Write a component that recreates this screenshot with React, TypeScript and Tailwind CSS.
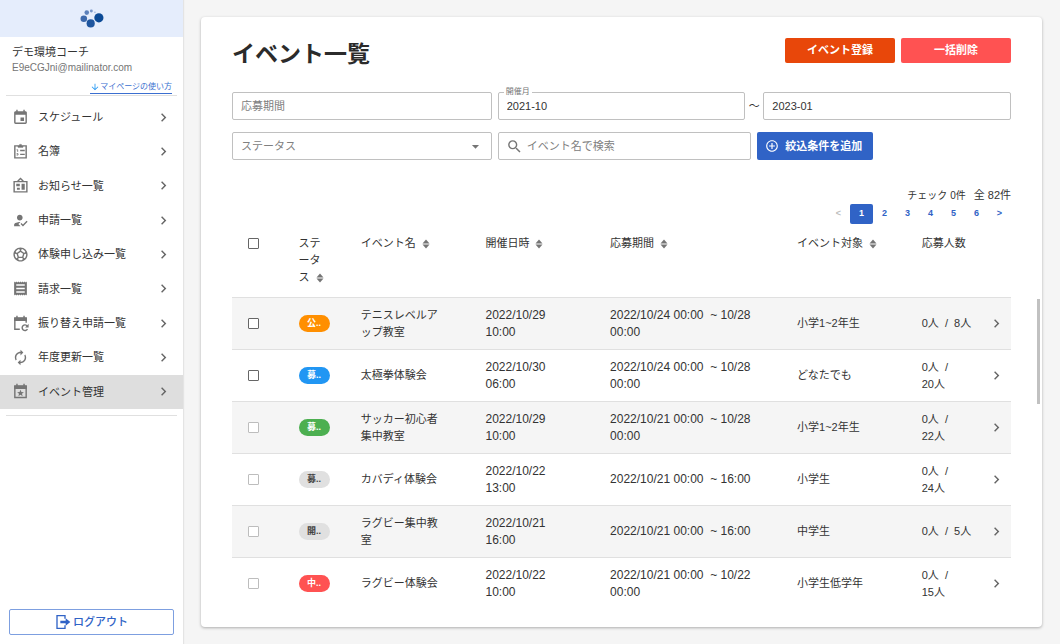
import type { ReactNode } from 'react'
import {
  MdAddCircleOutline,
  MdArrowDownward,
  MdArrowDropDown,
  MdAutorenew,
  MdChevronRight,
  MdEvent,
  MdHowToReg,
  MdSearch,
  MdSportsSoccer
} from 'react-icons/md'

interface MenuItem {
  label: string
  icon: ReactNode
  active?: boolean
}

interface EventRow {
  status: string
  chip: string
  name: string
  date: string
  period: string
  target: string
  count: string
  disabled?: boolean
}

const ClipboardListIcon = () => (
  <svg viewBox="0 0 24 24" fill="none" stroke="currentColor" strokeWidth="2">
    <path d="M9 4H4v17h16V4h-5" />
    <path d="M8.500 6V4H10a2 2 0 0 1 4 0h1.500v2z" fill="currentColor" strokeWidth="1" />
    <path d="M11.500 10.500H18M11.500 16H18" />
    <path d="M6.500 9.500h1.500v3M6.500 15h2v2h-2" strokeWidth="1.200" />
  </svg>
)

const BulletinBoardIcon = () => (
  <svg viewBox="0 0 24 24" fill="none" stroke="currentColor" strokeWidth="2">
    <path d="M3 6.500h18V21H3zM8 6l4-4 4 4" />
    <path d="M6 9.500h5v3.500H6zM13.500 9.500H18V18h-4.500zM7 15h4v3H7z" fill="currentColor" stroke="none" />
  </svg>
)

const ReceiptIcon = () => (
  <svg viewBox="0 0 24 24" fill="currentColor">
    <path d="M3 2l1.500 1.500L6 2l1.500 1.500L9 2l1.500 1.500L12 2l1.500 1.500L15 2l1.500 1.500L18 2l1.500 1.500L21 2v20l-1.500-1.500L18 22l-1.500-1.500L15 22l-1.500-1.500L12 22l-1.500-1.500L9 22l-1.500-1.500L6 22l-1.500-1.500L3 22zM6 6v2.200h12V6zm0 4.900v2.200h12v-2.200zm0 4.900V18h12v-2.200z" fillRule="evenodd" />
  </svg>
)

const CalendarRefreshIcon = () => (
  <svg viewBox="0 0 24 24" fill="none" stroke="currentColor" strokeWidth="2">
    <path d="M11 20H4V4h16v7" />
    <path d="M3 4h18v4.500H3zM6 1h2v3H6zM16 1h2v3h-2z" fill="currentColor" stroke="none" />
    <path d="M21.500 15.500a4 4 0 1 0 .3 4.500" />
    <path d="M23.500 12.500v5h-5z" fill="currentColor" stroke="none" />
  </svg>
)

const CalendarStarIcon = () => (
  <svg viewBox="0 0 24 24" fill="none" stroke="currentColor" strokeWidth="2">
    <path d="M4 4h16v16.500H4z" />
    <path d="M3 4h18v4.500H3zM6 1h2v3H6zM16 1h2v3h-2z" fill="currentColor" stroke="none" />
    <path d="m12 9.500 1.300 3.200 3.500.3-2.700 2.200.9 3.400-3-1.900-3 1.900.9-3.400L7.200 13l3.500-.3z" fill="currentColor" stroke="none" />
  </svg>
)

const LogoutIcon = () => (
  <svg viewBox="0 0 24 24" className="size-4" fill="none" stroke="currentColor" strokeWidth="2">
    <path d="M15 7V2.500H3v19h12V17" />
    <path d="M8 10.200h8V6.500l7 5.500-7 5.500v-3.700H8z" fill="currentColor" stroke="none" />
  </svg>
)

const SortIcon = () => (
  <svg viewBox="0 0 8 10" className="ml-1.5 inline-block h-[10px] w-2 align-[-2px] text-[#757575]" fill="currentColor">
    <path d="M4 .5l3.500 4h-7zM4 9.500L.5 5.500h7z" />
  </svg>
)

const Logo = () => (
  <svg viewBox="0 0 72 58" className="h-[19px] w-6">
    <circle cx="57" cy="27" r="14" fill="#0b4a96" />
    <circle cx="32" cy="44" r="12.500" fill="#1f569f" />
    <circle cx="11" cy="30" r="10" fill="#3d69ac" />
    <circle cx="20" cy="11" r="7" fill="#5b80ba" />
    <circle cx="34" cy="6" r="4.500" fill="#7795c8" />
    <circle cx="45" cy="10" r="2" fill="#8fa8d4" />
  </svg>
)

const menu: MenuItem[] = [
  { label: 'スケジュール', icon: <MdEvent /> },
  { label: '名簿', icon: <ClipboardListIcon /> },
  { label: 'お知らせ一覧', icon: <BulletinBoardIcon /> },
  { label: '申請一覧', icon: <MdHowToReg /> },
  { label: '体験申し込み一覧', icon: <MdSportsSoccer /> },
  { label: '請求一覧', icon: <ReceiptIcon /> },
  { label: '振り替え申請一覧', icon: <CalendarRefreshIcon /> },
  { label: '年度更新一覧', icon: <MdAutorenew /> },
  { label: 'イベント管理', icon: <CalendarStarIcon />, active: true }
]

const columns = [
  { label: 'ステータス', width: 'w-[8%]', sortable: true },
  { label: 'イベント名', width: 'w-[16%]', sortable: true },
  { label: '開催日時', width: 'w-[16%]', sortable: true },
  { label: '応募期間', width: 'w-[24%]', sortable: true },
  { label: 'イベント対象', width: 'w-[16%]', sortable: true },
  { label: '応募人数', width: 'w-[9%]', sortable: false }
]

const rows: EventRow[] = [
  { status: '公..', chip: 'bg-[#ff8f00] text-white', name: 'テニスレベルアップ教室', date: '2022/10/29\n10:00', period: '2022/10/24 00:00  ~ 10/28\n00:00', target: '小学1~2年生', count: '0人  /  8人' },
  { status: '募..', chip: 'bg-[#2196f3] text-white', name: '太極拳体験会', date: '2022/10/30\n06:00', period: '2022/10/24 00:00  ~ 10/28\n00:00', target: 'どなたでも', count: '0人  /\n20人' },
  { status: '募..', chip: 'bg-[#4caf50] text-white', name: 'サッカー初心者集中教室', date: '2022/10/29\n10:00', period: '2022/10/21 00:00  ~ 10/28\n00:00', target: '小学1~2年生', count: '0人  /\n22人', disabled: true },
  { status: '募..', chip: 'bg-[#e0e0e0] text-[#424242]', name: 'カバディ体験会', date: '2022/10/22\n13:00', period: '2022/10/21 00:00  ~ 16:00', target: '小学生', count: '0人  /\n24人', disabled: true },
  { status: '開..', chip: 'bg-[#e0e0e0] text-[#424242]', name: 'ラグビー集中教室', date: '2022/10/21\n16:00', period: '2022/10/21 00:00  ~ 16:00', target: '中学生', count: '0人  /  5人', disabled: true },
  { status: '中..', chip: 'bg-[#ff5252] text-white', name: 'ラグビー体験会', date: '2022/10/22\n10:00', period: '2022/10/21 00:00  ~ 10/22\n00:00', target: '小学生低学年', count: '0人  /\n15人', disabled: true }
]

const fieldClass =
  'h-7 w-full rounded-xs border border-[#c0c0c0] bg-white px-2 text-[11px] outline-none placeholder:text-[#808080]'

const checkboxClass =
  'block size-[11px] appearance-none rounded-[1px] border border-[#666] bg-white checked:bg-[#3063c6] disabled:border-[#bdbdbd]'

function Sidebar() {
  return (
    <aside className="flex w-[183px] shrink-0 flex-col bg-white shadow-[1px_0_1px_#e4e4e4]">
      <div className="flex h-[37px] items-center justify-center bg-[#e5edfc]">
        <Logo />
      </div>
      <div className="px-3 pt-[7px]">
        <p className="text-[11px] leading-[17px]">デモ環境コーチ</p>
        <p className="text-[10px] leading-[14px] text-[#757575]">E9eCGJni@mailinator.com</p>
      </div>
      <a href="#guide" className="mt-1.5 mr-[11px] flex items-center self-end border-b border-[#3b6fd0] text-[8px] leading-3 text-[#3b6fd0]">
        <MdArrowDownward className="size-[10px] text-[#2196f3]" />
        マイページの使い方
      </a>
      <hr className="mx-1.5 mt-px border-[#e0e0e0]" />
      <nav className="mt-1">
        <ul className="grid h-[309px] auto-rows-fr">
          {menu.map((item) => (
            <li key={item.label} className={item.active ? 'bg-[#dedede]' : ''}>
              <a href="#menu" className="flex h-full items-center pr-[11px] pl-3 text-[11px]">
                <span className="mr-[9px] size-[17px] text-[#757575] [&>svg]:size-full">{item.icon}</span>
                <span className="flex-1">{item.label}</span>
                <MdChevronRight className="size-[17px] text-[#666]" />
              </a>
            </li>
          ))}
        </ul>
      </nav>
      <hr className="mx-1.5 mt-1.5 border-[#e0e0e0]" />
      <button className="m-[9px] mt-auto flex h-[26px] items-center justify-center gap-0.5 rounded-xs border border-[#7d9fe0] text-[11px] font-medium text-[#3063c6]">
        <LogoutIcon />
        ログアウト
      </button>
    </aside>
  )
}

function Filters() {
  return (
    <div className="mt-[22px] grid grid-cols-3 gap-y-3">
      <input className={fieldClass} aria-label="応募期間" placeholder="応募期間" />
      <div className="col-span-2 flex items-center pl-1.5">
        <div className="relative flex-1">
          <label htmlFor="month-from" className="absolute -top-1.5 left-1.5 bg-white px-0.5 text-[8px] leading-3 text-[#757575]">
            開催月
          </label>
          <input id="month-from" className={fieldClass} defaultValue="2021-10" />
        </div>
        <span className="w-[18px] text-center text-[11px]">～</span>
        <div className="flex-1">
          <input className={fieldClass} aria-label="開催月（終了）" defaultValue="2023-01" />
        </div>
      </div>

      <div className="relative">
        <select className={`${fieldClass} appearance-none text-[#808080]`} aria-label="ステータス">
          <option>ステータス</option>
        </select>
        <MdArrowDropDown className="pointer-events-none absolute top-1.5 right-2 size-[17px] text-[#757575]" />
      </div>
      <div className="relative pl-1.5">
        <MdSearch className="absolute top-1.5 left-[14px] size-[17px] text-[#757575]" />
        <input className={`${fieldClass} pl-7`} aria-label="イベント名で検索" placeholder="イベント名で検索" />
      </div>
      <div className="pl-1.5">
        <button className="flex h-7 items-center gap-1.5 rounded-xs bg-[#3063c6] pr-[11px] pl-2 text-[11px] font-bold text-white">
          <MdAddCircleOutline className="size-[14px]" />
          絞込条件を追加
        </button>
      </div>
    </div>
  )
}

function Pagination() {
  return (
    <div className="flex justify-end text-[9px] font-bold text-[#3063c6]">
      {['<', '1', '2', '3', '4', '5', '6', '>'].map((page) => (
        <button
          key={page}
          disabled={page === '<'}
          className={`h-5 w-[23px] rounded-xs disabled:text-[#bdbdbd] ${page === '1' ? 'bg-[#3063c6] text-white' : ''}`}
        >
          {page}
        </button>
      ))}
    </div>
  )
}

function EventTable() {
  return (
    <table className="w-full table-fixed text-left text-[11px] leading-[17px]">
      <thead>
        <tr className="border-b border-[#e0e0e0] align-top">
          <th className="w-[7%] py-[14px] pl-4">
            <input type="checkbox" className={checkboxClass} aria-label="すべて選択" />
          </th>
          {columns.map((col, i) => (
            <th key={col.label} className={`${col.width} py-[11px] pl-3 font-normal ${i === 0 ? 'pr-6 break-all' : ''}`}>
              {col.label}
              {col.sortable && <SortIcon />}
            </th>
          ))}
          <th className="w-[4%]" />
        </tr>
      </thead>
      <tbody>
        {rows.map((row) => (
          <tr key={row.name} className="h-[52px] border-b border-[#e0e0e0] last:border-b-0 odd:bg-[#f5f5f5]">
            <td className="pl-4">
              <input type="checkbox" className={checkboxClass} aria-label={row.name} disabled={row.disabled} />
            </td>
            <td className="pl-3">
              <span className={`block h-[17px] w-[31px] rounded-full text-center text-[9px] leading-[17px] font-bold ${row.chip}`}>
                {row.status}
              </span>
            </td>
            <td className="pr-[30px] pl-3 break-all">{row.name}</td>
            <td className="pl-3 text-xs leading-[17px] whitespace-pre-line">{row.date}</td>
            <td className="pl-3 text-xs leading-[17px] whitespace-pre-wrap">{row.period}</td>
            <td className="pl-3">{row.target}</td>
            <td className="pl-3 whitespace-pre">{row.count}</td>
            <td>
              <MdChevronRight className="ml-2 size-[17px] text-[#666]" />
            </td>
          </tr>
        ))}
      </tbody>
    </table>
  )
}

export default function App() {
  return (
    <div
      lang="ja"
      className="flex min-h-screen bg-[#f5f5f5] font-['Liberation_Sans','Noto_Sans_CJK_JP',sans-serif] text-[#333]"
    >
      <Sidebar />
      <main className="flex min-w-0 flex-1 px-[18px] py-[17px]">
        <section className="relative min-w-0 flex-1 rounded-sm bg-white px-[31px] pt-[21px] pb-4 shadow-[0_1px_3px_rgba(0,0,0,0.3)]">
          <header className="flex items-start justify-between">
            <h1 className="text-[23px] leading-8 font-bold text-[#2b2b2b]">イベント一覧</h1>
            <div className="flex gap-1.5 text-[11px] font-bold text-white">
              <button className="h-[25px] w-[110px] rounded-xs bg-[#e8470a]">イベント登録</button>
              <button className="h-[25px] w-[110px] rounded-xs bg-[#ff5252]">一括削除</button>
            </div>
          </header>

          <Filters />

          <p className="mt-[27px] flex items-center justify-end gap-2 text-[11px] leading-[17px]">
            <span className="text-[10px]">チェック 0件</span>
            <span>全 82件</span>
          </p>
          <Pagination />
          <EventTable />

          {/* Scroll thumb */}
          <div className="absolute top-[282px] right-0.5 h-[105px] w-[3px] bg-[#c1c1c1]" />
        </section>
      </main>
    </div>
  )
}
